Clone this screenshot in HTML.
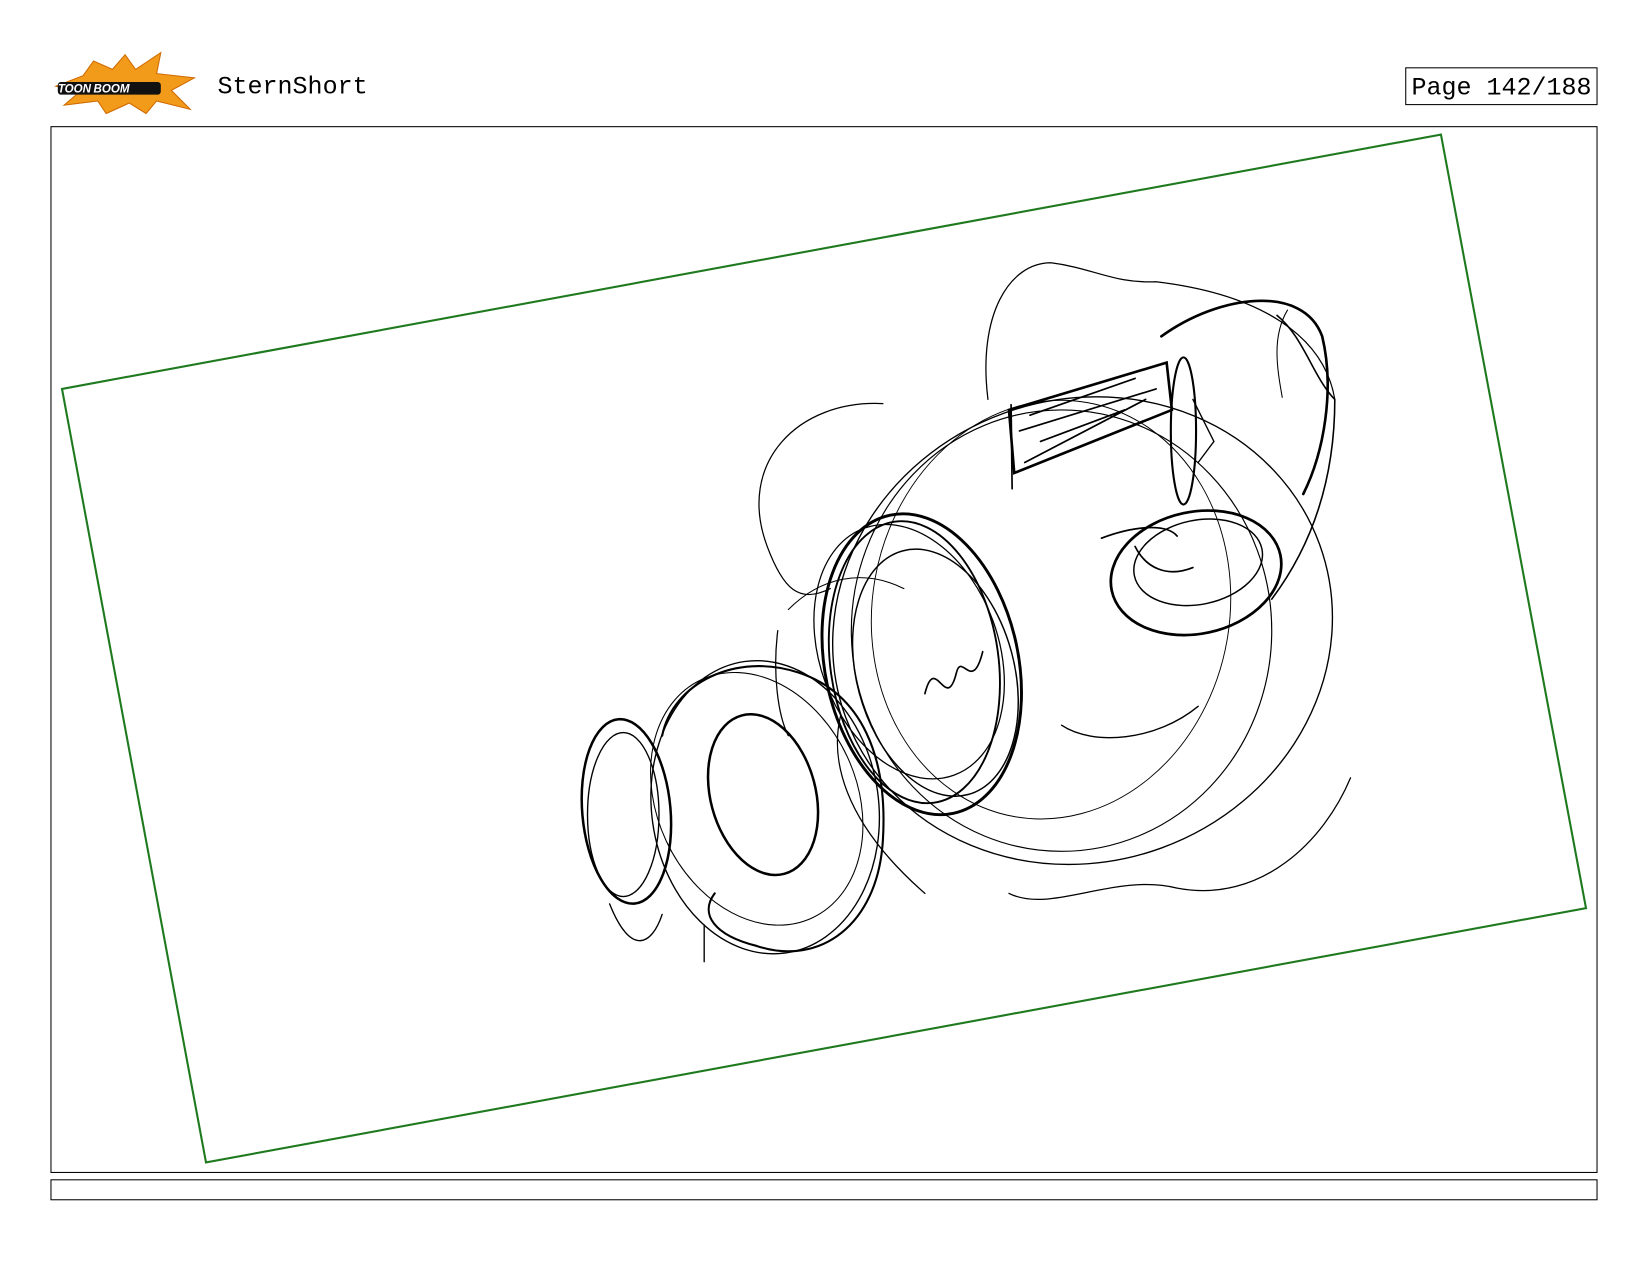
<!DOCTYPE html>
<html><head><meta charset="utf-8"><style>
html,body{margin:0;padding:0;background:#fff;width:1648px;height:1276px;overflow:hidden}
svg{display:block}
</style></head><body>
<svg width="1648" height="1276" viewBox="0 0 1568 1214" xmlns="http://www.w3.org/2000/svg">
<rect width="1568" height="1214" fill="#fff"/>
<g transform="translate(119,80)">
<polygon points="-66,2 -40,-8 -30,-22 -12,-14 0,-28 10,-14 34,-30 30,-10 66,-6 44,6 62,24 30,16 20,28 4,18 -18,28 -26,16 -58,20 -44,8" fill="#f29a1a" stroke="#d06a00" stroke-width="1"/>
<rect x="-64" y="-2" width="98" height="12" rx="3" fill="#111"/>
<text x="-64" y="8" font-family="Liberation Sans,sans-serif" font-weight="bold" font-style="italic" font-size="11" fill="#fff">TOON</text>
<text x="-30" y="8" font-family="Liberation Sans,sans-serif" font-weight="bold" font-style="italic" font-size="11" fill="#fff">BOOM</text>
</g>
<text x="207" y="89" font-family="Liberation Mono,monospace" font-size="23.8" fill="#000">SternShort</text>
<rect x="1337.5" y="64.5" width="182" height="35" fill="none" stroke="#000" stroke-width="1"/>
<text x="1343" y="90" font-family="Liberation Mono,monospace" font-size="23.8" fill="#000">Page 142/188</text>
<rect x="48.5" y="120.5" width="1471" height="995" fill="none" stroke="#000" stroke-width="1"/>
<rect x="48.5" y="1122.5" width="1471" height="19" fill="none" stroke="#000" stroke-width="1"/>
<polygon points="59,370 1371,128 1509,864 196,1106" fill="none" stroke="#1f7a1f" stroke-width="2"/>
<g fill="none" stroke="#000" stroke-linecap="round">
<path d="M940,380 C930,300 960,250 1000,250 C1040,255 1060,270 1100,268 C1200,280 1260,320 1270,380" stroke-width="1.2"/>
<path d="M840,384 C760,380 700,440 730,520 C745,560 760,575 790,560" stroke-width="1.2"/>
<ellipse cx="1030" cy="600" rx="240" ry="220" transform="rotate(-20 1030 600)" stroke-width="1.3"/>
<ellipse cx="1010" cy="600" rx="200" ry="210" stroke-width="1.1"/>
<ellipse cx="1000" cy="580" rx="170" ry="200" transform="rotate(10 1000 580)" stroke-width="0.9"/>
<path d="M960,850 C1000,870 1060,830 1120,845 C1200,860 1260,800 1285,740" stroke-width="1.2"/>
<path d="M1105,320 C1160,280 1240,270 1258,320 C1270,370 1260,430 1240,470" stroke-width="2.5"/>
<path d="M1215,300 C1240,320 1250,360 1270,380 C1270,470 1240,530 1210,570" stroke-width="1.5"/>
<path d="M1225,295 C1210,320 1215,350 1220,378" stroke-width="1"/>
<path d="M960,390 L1110,345 L1115,390 L965,450 Z" stroke-width="2.5"/>
<path d="M962,385 L963,465 M970,410 L1100,370 M975,440 L1090,380 M980,395 L1080,360 M990,420 L1070,390" stroke-width="1.6"/>
<ellipse cx="1126" cy="410" rx="12" ry="70" stroke-width="2"/>
<path d="M1135,380 L1155,420 L1140,440" stroke-width="1.3"/>
<ellipse cx="1138" cy="545" rx="82" ry="58" transform="rotate(-12 1138 545)" stroke-width="2.6"/>
<ellipse cx="1140" cy="535" rx="62" ry="40" transform="rotate(-12 1140 535)" stroke-width="1.4"/>
<path d="M1048,512 C1080,500 1110,498 1120,510 M1080,520 C1090,540 1110,550 1135,540" stroke-width="1.6"/>
<ellipse cx="877" cy="632" rx="92" ry="145" transform="rotate(-12 877 632)" stroke-width="2.8"/>
<ellipse cx="870" cy="630" rx="80" ry="135" transform="rotate(-8 870 630)" stroke-width="1.8"/>
<ellipse cx="890" cy="640" rx="75" ry="120" transform="rotate(-15 890 640)" stroke-width="1.4"/>
<ellipse cx="865" cy="620" rx="85" ry="125" transform="rotate(-20 865 620)" stroke-width="1.2"/>
<path d="M880,660 C890,620 900,680 910,640 C915,620 925,660 935,620" stroke-width="1.6"/>
<path d="M1010,690 C1040,710 1100,705 1140,672" stroke-width="1.3"/>
<ellipse cx="726" cy="756" rx="50" ry="78" transform="rotate(-15 726 756)" stroke-width="2.4"/>
<ellipse cx="728" cy="768" rx="108" ry="140" transform="rotate(-8 728 768)" stroke-width="1.3"/>
<ellipse cx="720" cy="760" rx="95" ry="125" transform="rotate(-25 720 760)" stroke-width="1"/>
<path d="M630,700 C640,650 700,620 760,640 C820,660 845,720 840,800 C835,880 780,920 720,900 C680,890 665,870 680,850" stroke-width="2"/>
<ellipse cx="596" cy="772" rx="42" ry="88" transform="rotate(-5 596 772)" stroke-width="2.4"/>
<ellipse cx="593" cy="775" rx="34" ry="78" stroke-width="1.3"/>
<path d="M580,860 C600,910 620,900 630,870 M670,880 L670,915" stroke-width="1.3"/>
<path d="M740,600 C735,640 740,680 750,700 M800,680 C790,720 800,780 880,850" stroke-width="1.2"/>
<path d="M750,580 C780,550 820,540 860,560" stroke-width="1"/>
</g>
</svg>
</body></html>
